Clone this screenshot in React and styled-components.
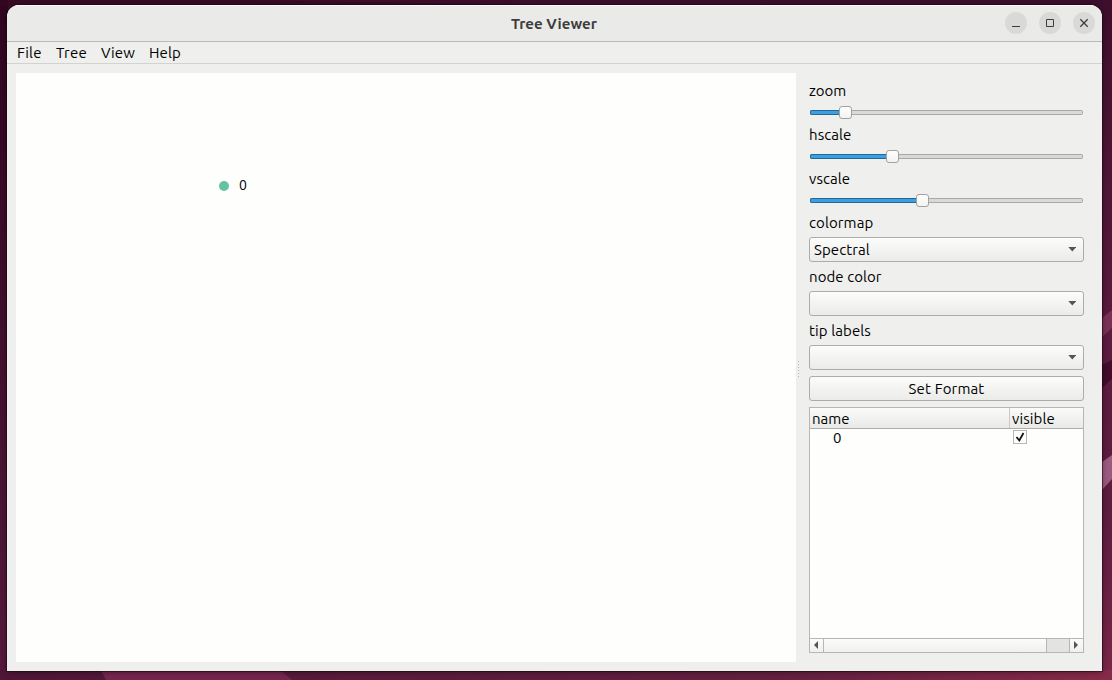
import React from "react";
import styled, { createGlobalStyle } from "styled-components";

const Global = createGlobalStyle`
  * { box-sizing: border-box; }
  html, body, #root { height: 100%; margin: 0; }
  body { overflow: hidden; font: 15px/20px Ubuntu, "Noto Sans", sans-serif; color: #000; }
`;

const Desktop = styled.div`
  position: relative;
  width: 1112px;
  height: 680px;
  padding: 5px 10px 9px 7px;
  background: linear-gradient(180deg, #3d0e2b 0%, #4b1533 20%, #5c1b40 50%, #5d1c40 75%, #7a2748 100%);
`;

const Wallpaper = styled.svg`
  position: absolute;
  inset: 0;
`;

const Window = styled.main`
  position: relative;
  display: flex;
  flex-direction: column;
  height: 666px;
  border-radius: 12px 12px 0 0;
  background: #efefee;
  box-shadow: 0 0 0 1px rgba(25, 5, 18, 0.55), 0 1px 6px rgba(0, 0, 0, 0.4);
  overflow: hidden;
`;

const TitleBar = styled.header`
  display: grid;
  grid-template-columns: 1fr auto 1fr;
  align-items: center;
  height: 37px;
  padding-right: 7px;
  background: #eaeae9;
  border-bottom: 1px solid #b9b9b8;
  box-shadow: inset 0 1px #f9f9f8;
`;

const Title = styled.h1`
  grid-column: 2;
  margin: 0;
  padding: 1px 0 0 6px;
  font-size: 15px;
  line-height: 20px;
  font-weight: 700;
  color: #3d3d3d;
  letter-spacing: 0.08px;
`;

const WindowButtons = styled.div`
  display: flex;
  justify-content: flex-end;
  gap: 12px;
`;

const WindowButton = styled.button`
  width: 22px;
  height: 22px;
  padding: 0;
  border: 0;
  border-radius: 50%;
  background: #d9d9d8;
  svg { display: block; }
`;

const MenuBar = styled.nav`
  display: flex;
  height: 22px;
  padding-left: 10px;
  border-bottom: 1px solid #d2d2d1;
`;

const MenuItem = styled.span`
  width: ${(p) => p.$width}px;
  line-height: 22px;
  white-space: nowrap;
  letter-spacing: ${(p) => p.$track}px;
`;

const Body = styled.div`
  display: flex;
  flex: 1;
  padding: 9px 18px 9px 9px;
`;

const TreeCanvas = styled.section`
  position: relative;
  width: 780px;
  height: 589px;
  background: #fefefd;
`;

const Node = styled.div`
  position: absolute;
  left: 203px;
  top: 102px;
  display: flex;
  align-items: center;
  gap: 10px;
  font-size: 14px;
  &::before {
    content: "";
    width: 10px;
    height: 10px;
    margin-top: 1px;
    border-radius: 50%;
    background: #66c2a5;
  }
`;

const SplitHandle = styled.div`
  align-self: center;
  width: 5px;
  height: 17px;
  margin: 3px 8px 0 0;
  background: repeating-linear-gradient(180deg, #b4b4b3 0 1px, transparent 1px 3px) 2px 0 / 1px 17px no-repeat;
`;

const Panel = styled.aside`
  display: flex;
  flex-direction: column;
  width: 275px;
  padding-top: 8px;
`;

const Label = styled.label`
  display: block;
  height: 20px;
  white-space: nowrap;
  letter-spacing: ${(p) => p.$track || 0}px;
`;

const Slider = styled.div`
  display: flex;
  align-items: center;
  height: 13px;
  margin: 5px 0 6px;
  padding: 0 1px;
`;

const Filled = styled.span`
  width: ${(p) => p.$width}px;
  height: 5px;
  border: 1px solid #1f6a9c;
  border-right: 0;
  border-radius: 2px 0 0 2px;
  background: #3f9edb;
`;

const Thumb = styled.span`
  width: 13px;
  height: 13px;
  border: 1px solid #a2a2a1;
  border-radius: 3px;
  background: linear-gradient(#fefefe, #f3f3f2);
`;

const Groove = styled.span`
  flex: 1;
  height: 5px;
  border: 1px solid #a9a9a8;
  border-left: 0;
  border-radius: 0 2px 2px 0;
  background: #d9d9d8;
`;

const Control = styled.button`
  display: flex;
  align-items: center;
  justify-content: ${(p) => (p.$center ? "center" : "space-between")};
  height: 25px;
  margin: 0 0 6px;
  padding: ${(p) => (p.$center ? "0 4px" : "0 7px 0 4px")};
  border: 1px solid #acacab;
  border-radius: 3px;
  background: linear-gradient(#fcfcfb, #ebebea);
  color: inherit;
  font: inherit;
  letter-spacing: ${(p) => p.$track || 0}px;
`;

const Field = styled.div`
  display: flex;
  flex-direction: column;
  gap: 4px;
  margin-bottom: ${(p) => (p.$last ? 0 : -1)}px;
`;

const Table = styled.section`
  display: flex;
  flex-direction: column;
  height: 246px;
  border: 1px solid #b6b6b5;
  background: #fefefd;
`;

const TableRow = styled.div`
  display: grid;
  grid-template-columns: 200px 1fr;
  height: 18px;
  align-items: center;
`;

const TableHead = styled(TableRow)`
  height: 21px;
  border-bottom: 1px solid #adadac;
  background: linear-gradient(#fbfbfa, #e9e9e8);
`;

const HeadCell = styled.span`
  height: 20px;
  padding-left: 2px;
  line-height: 21px;
  border-left: ${(p) => (p.$divided ? "1px solid #c8c8c7" : "0")};
  margin-left: ${(p) => (p.$divided ? -1 : 0)}px;
  letter-spacing: ${(p) => p.$track || 0}px;
`;

const NameCell = styled.span`
  padding-left: 23px;
  line-height: 18px;
`;

const Checkbox = styled.span`
  width: 14px;
  height: 14px;
  margin: -3px 0 0 3px;
  border: 1px solid #b6b6b5;
  background: #fefefd;
  svg { display: block; }
`;

const ScrollBar = styled.div`
  display: grid;
  grid-template-columns: 13px 224px 22px 1fr;
  height: 14px;
  margin-top: auto;
  border-top: 1px solid #b6b6b5;
  background: #e3e3e2;
`;

const ScrollPart = styled.div`
  display: flex;
  align-items: center;
  padding: 0 0 1px 4px;
  background: linear-gradient(#fcfcfb, #f0f0ef);
  border: solid #b6b6b5;
  border-width: ${(p) => (p.$thumb ? "0 1px" : p.$right ? "0 0 0 1px" : "0")};
`;

const sliders = [
  { name: "zoom", value: 29 },
  { name: "hscale", value: 76, track: 0.08 },
  { name: "vscale", value: 106, track: 0.08 },
];

const fields = [
  { name: "colormap", value: "Spectral", track: 0.1 },
  { name: "node color", value: "", track: 0.07 },
  { name: "tip labels", value: "", track: 0.1 },
];

const DownArrow = () => (
  <svg width="8" height="5"><path d="M.3 0h8L4.3 4.5z" fill="#555" /></svg>
);

export default function App() {
  return (
    <Desktop>
      <Global />
      <Wallpaper width="1112" height="680">
        <defs>
          <linearGradient id="left" x2="0" y2="1">
            <stop stopColor="#300520" /><stop offset="1" stopColor="#561a3d" />
          </linearGradient>
          <linearGradient id="bottom">
            <stop stopColor="#4f1737" /><stop offset=".7" stopColor="#64203f" /><stop offset="1" stopColor="#862b49" />
          </linearGradient>
        </defs>
        <path d="M0 0H8V680H0z" fill="url(#left)" />
        <path d="M0 0H240L600 6H0z" fill="#35091f" opacity=".6" />
        <path d="M0 670H1112V680H0z" fill="url(#bottom)" />
        <path d="M101 670H280L292 680H106z" fill="#75264f" />
        <path d="M1102 318l10-8v18l-10 9z" fill="#7b3157" />
        <path d="M1102 365l10-5v19l-10 9z" fill="#430c2d" />
        <path d="M1102 462l10-7v24l-10 11z" fill="#9b5a80" />
      </Wallpaper>
      <Window>
        <TitleBar>
          <Title>Tree Viewer</Title>
          <WindowButtons>
            <WindowButton aria-label="Minimize">
              <svg width="22" height="22"><path d="M7 14.5h8" stroke="#3d3d3d" /></svg>
            </WindowButton>
            <WindowButton aria-label="Maximize">
              <svg width="22" height="22"><path d="M7.5 7.5h7v7h-7z" fill="none" stroke="#3d3d3d" /></svg>
            </WindowButton>
            <WindowButton aria-label="Close">
              <svg width="22" height="22"><path d="M7.3 7.3l7.4 7.4M14.7 7.3l-7.4 7.4" stroke="#3d3d3d" strokeWidth="1.3" /></svg>
            </WindowButton>
          </WindowButtons>
        </TitleBar>
        <MenuBar>
          <MenuItem $width={39} $track={0.25}>File</MenuItem>
          <MenuItem $width={45} $track={0.2}>Tree</MenuItem>
          <MenuItem $width={48} $track={0.1}>View</MenuItem>
          <MenuItem $width={40} $track={0.15}>Help</MenuItem>
        </MenuBar>
        <Body>
          <TreeCanvas><Node>0</Node></TreeCanvas>
          <SplitHandle />
          <Panel>
            {sliders.map((s) => (
              <React.Fragment key={s.name}>
                <Label $track={s.track}>{s.name}</Label>
                <Slider><Filled $width={s.value} /><Thumb /><Groove /></Slider>
              </React.Fragment>
            ))}
            {fields.map((f, i) => (
              <Field key={f.name} $last={i === fields.length - 1}>
                <Label $track={f.track}>{f.name}</Label>
                <Control $track={0.1}><span>{f.value}</span><DownArrow /></Control>
              </Field>
            ))}
            <Control $center $track={0.15}>Set Format</Control>
            <Table>
              <TableHead>
                <HeadCell>name</HeadCell>
                <HeadCell $divided $track={0.1}>visible</HeadCell>
              </TableHead>
              <TableRow>
                <NameCell>0</NameCell>
                <Checkbox>
                  <svg width="12" height="12"><path d="M2.5 6l2.8 3.5L9.5 2" fill="none" stroke="#111" strokeWidth="1.8" /></svg>
                </Checkbox>
              </TableRow>
              <ScrollBar>
                <ScrollPart><svg width="4" height="8"><path d="M4 0v8L0 4z" fill="#555" /></svg></ScrollPart>
                <ScrollPart $thumb />
                <span />
                <ScrollPart $right><svg width="4" height="8"><path d="M0 0v8l4-4z" fill="#555" /></svg></ScrollPart>
              </ScrollBar>
            </Table>
          </Panel>
        </Body>
      </Window>
    </Desktop>
  );
}
